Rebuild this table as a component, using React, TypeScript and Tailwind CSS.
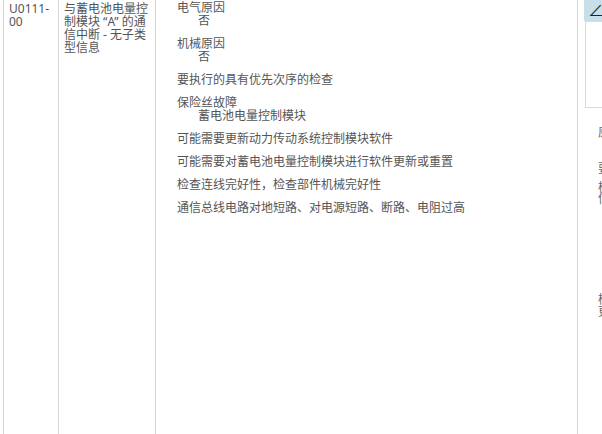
import React from 'react';

// Diagnostic table fragment
const CAUSES = [
  { title: '电气原因', sub: '否' },
  { title: '机械原因', sub: '否' },
  { title: '要执行的具有优先次序的检查' },
  { title: '保险丝故障', sub: '蓄电池电量控制模块' },
  { title: '可能需要更新动力传动系统控制模块软件' },
  { title: '可能需要对蓄电池电量控制模块进行软件更新或重置' },
  { title: '检查连线完好性，检查部件机械完好性' },
  { title: '通信总线电路对地短路、对电源短路、断路、电阻过高' },
];

const DESC_LINES = ['与蓄电池电量控', '制模块 “A” 的通', '信中断 - 无子类', '型信息'];

const CauseItem = ({ title, sub }: { title: string; sub?: string }) => (
  <div className="mb-[10px]">
    <div className="whitespace-nowrap">{title}</div>
    {sub && <div className="pl-[21px] whitespace-nowrap">{sub}</div>}
  </div>
);

const SidePanel = () => (
  <div className="w-[19px] ml-[6px] overflow-hidden flex flex-col">
    <div className="h-[21px] bg-[#c8dfe9] flex items-center pl-[4px] text-[16px] text-[#222] whitespace-nowrap">∠</div>
    <div className="h-[87px] ml-px border border-r-0 border-[#dadada] bg-white" />
    <div className="pl-[14px] pt-[18px] whitespace-nowrap text-[#666]">
      <div className="leading-[13px]">原因</div>
      <div className="mt-[23px] leading-[13px]">要求</div>
      <div className="mt-[7px] leading-[11px]">检查</div>
      <div className="leading-[11px]">信息</div>
      <div className="mt-[90px] leading-[12px]">检查</div>
      <div className="leading-[12px]">更新</div>
    </div>
  </div>
);

export default function App() {
  return (
    <div
      className="w-[602px] h-[434px] bg-white overflow-hidden flex pl-[3px] text-[12px] leading-[13px] text-[#555]"
      style={{ fontFamily: '"Noto Sans", "Noto Sans CJK SC", sans-serif' }}
    >
      {/* Code column */}
      <div className="w-[55px] shrink-0 border-l border-[#d6d6d6] pl-[5px] pt-[1.5px]">
        <div>U0111-</div>
        <div>00</div>
      </div>

      {/* Description column */}
      <div className="w-[97px] shrink-0 border-l border-[#d6d6d6] pl-[5px] pt-[1.5px]">
        {DESC_LINES.map((line) => (
          <div key={line} className="whitespace-nowrap">{line}</div>
        ))}
      </div>

      {/* Causes column */}
      <div className="w-[423px] shrink-0 border-x border-[#d6d6d6] pl-[21px] pt-[0.5px]">
        {CAUSES.map((c) => (
          <CauseItem key={c.title} {...c} />
        ))}
      </div>

      <SidePanel />
    </div>
  );
}
